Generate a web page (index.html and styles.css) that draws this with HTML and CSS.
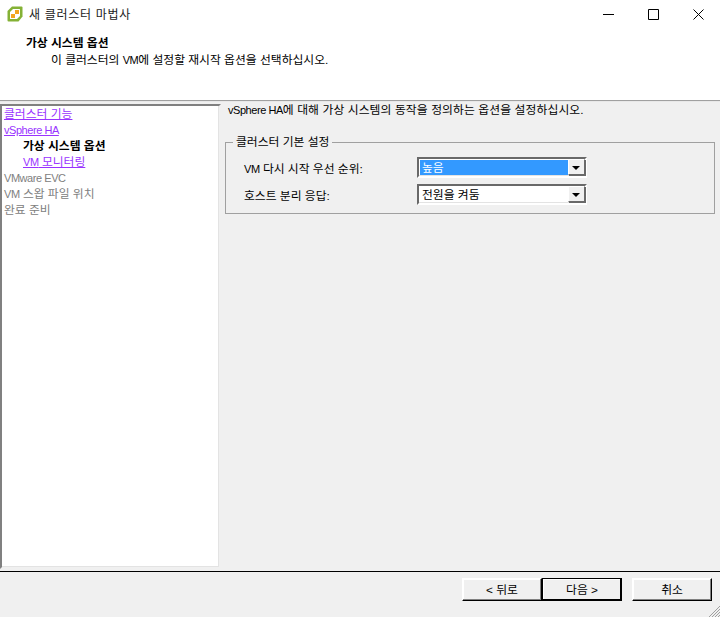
FILE: index.html
```html
<!DOCTYPE html>
<html lang="ko">
<head>
<meta charset="utf-8">
<title>새 클러스터 마법사</title>
<link rel="stylesheet" href="styles.css">
</head>
<body>
<div class="window">
  <header class="titlebar">
    <svg class="logo" width="16" height="16" viewBox="0 0 16 16">
      <path d="M5 .5h9.500a1 1 0 0 1 1 1v9l-4 5H1.500a1 1 0 0 1-1-1V5z" fill="#84b135"/>
      <path d="M6 3h6.500a.5.500 0 0 1 .5.500V10l-3 3H3.500a.5.500 0 0 1-.5-.5V6z" fill="#fff"/>
      <path d="M8 4h4v4H8.500V8H8zM4 8h4v4H4z" fill="#f2a51f"/>
    </svg>
    <span class="title">새 클러스터 마법사</span>
    <div class="controls">
      <svg width="11" height="11" viewBox="0 0 11 11"><path d="M0 5.500h11" stroke="#000" fill="none"/></svg>
      <svg width="11" height="11" viewBox="0 0 11 11"><path d="M.5.500h10v10H.500z" stroke="#000" fill="none"/></svg>
      <svg width="11" height="11" viewBox="0 0 11 11"><path d="M.5.500l10 10M10.500.500l-10 10" stroke="#000" fill="none"/></svg>
    </div>
  </header>
  <section class="heading">
    <div class="heading-title">가상 시스템 옵션</div>
    <div class="heading-sub">이 클러스터의 <span class="lat">VM</span>에 설정할 재시작 옵션을 선택하십시오.</div>
  </section>
  <main class="body">
    <nav class="steps">
      <a class="step link">클러스터 기능</a>
      <a class="step link"><span class="lat">vSphere HA</span></a>
      <span class="step sub current">가상 시스템 옵션</span>
      <a class="step sub link"><span class="lat">VM</span> 모니터링</a>
      <span class="step off"><span class="lat">VMware EVC</span></span>
      <span class="step off"><span class="lat">VM</span> 스왑 파일 위치</span>
      <span class="step off">완료 준비</span>
    </nav>
    <div class="content">
      <p class="intro"><span class="lat">vSphere HA</span>에 대해 가상 시스템의 동작을 정의하는 옵션을 설정하십시오.</p>
      <fieldset class="group">
        <legend>클러스터 기본 설정</legend>
        <div class="row">
          <label><span class="lat">VM</span> 다시 시작 우선 순위:</label>
          <div class="combo"><span class="value selected">높음</span><span class="arrow"></span></div>
        </div>
        <div class="row">
          <label>호스트 분리 응답:</label>
          <div class="combo"><span class="value">전원을 켜둠</span><span class="arrow"></span></div>
        </div>
      </fieldset>
    </div>
  </main>
  <footer class="footer">
    <div class="buttons">
      <div class="pair">
        <button class="btn">&lt; 뒤로</button>
        <button class="btn primary">다음 &gt;</button>
      </div>
      <button class="btn">취소</button>
    </div>
    <svg class="grip" width="12" height="12" viewBox="0 0 12 12"><path d="M12 1L1 12M12 4L4 12M12 7L7 12M12 10L10 12" stroke="#a0a0a0" fill="none"/></svg>
  </footer>
</div>
</body>
</html>
```

FILE: styles.css
```css
* { box-sizing: border-box; }
html, body { margin: 0; padding: 0; }
body {
  width: 720px;
  height: 617px;
  overflow: hidden;
  font-family: "Liberation Sans", "Noto Sans CJK KR", sans-serif;
  font-size: 11.8px;
  color: #000;
  background: #f0f0f0;
}
.lat { font-size: 11px; letter-spacing: -0.45px; }
.window { display: flex; flex-direction: column; height: 617px; position: relative; }
.titlebar { height: 30px; background: #fff; display: flex; align-items: center; padding: 0 0 2px 7px; }
.logo { margin-right: 6px; }
.title { font-size: 12px; color: #222; flex: 1; letter-spacing: 0.7px; padding-bottom: 2px; }
.controls { display: flex; gap: 34px; padding-right: 16px; }
.heading { height: 71px; background: #fff; border-bottom: 1px solid #a0a0a0; padding: 6px 0 0 26px; }
.heading-title { font-weight: 700; height: 15px; line-height: 15px; }
.heading-sub { padding-left: 25px; line-height: 15px; margin-top: 2px; }
.body { flex: 1; display: flex; padding-top: 2px; border-top: 1px solid #e8e8e8; }
.steps {
  width: 221px;
  height: 465px;
  background: #fff;
  border: 2px solid;
  border-color: #808080 #f0f0f0 #f0f0f0 #808080;
  box-shadow: inset -1px -1px 0 #e3e3e3;
  padding: 1px 2px 0;
  display: flex;
  flex-direction: column;
}
.step { height: 16px; line-height: 15px; white-space: nowrap; }
.link { color: #9933ff; text-decoration: underline; }
.sub { padding-left: 19px; }
.current { font-weight: 700; }
.off { color: #808080; }
.content { flex: 1; padding: 0 5px 0 4px; }
.intro { margin: 0 0 0 3px; height: 15px; line-height: 13px; white-space: nowrap; letter-spacing: 0.1px; }
.group {
  margin: 17px 0 0;
  height: 78px;
  border: 1px solid #a0a0a0;
  padding: 6px 0 0 18px;
}
.group legend { padding: 0 3px; margin-left: -11px; line-height: 12px; }
.row { display: flex; align-items: center; height: 27px; }
.row label { width: 173px; }
.combo {
  width: 170px;
  height: 21px;
  display: flex;
  background: #fff;
  border: 2px solid;
  border-color: #696969 #fff #fff #696969;
  box-shadow: inset -1px -1px 0 #e3e3e3;
  padding: 1px 0 1px 1px;
}
.value { flex: 1; line-height: 17px; padding-left: 2px; }
.selected { background: #3399ff; color: #fff; }
.arrow {
  width: 17px;
  margin: -1px 0 0;
  background: #f0f0f0;
  border: 1px solid;
  border-color: #fff #696969 #696969 #fff;
  box-shadow: 1px 1px 0 #696969;
  position: relative;
}
.arrow::after {
  content: "";
  position: absolute;
  left: 3px;
  top: 6px;
  border: 4px solid transparent;
  border-top-color: #000;
  border-bottom: 0;
}
.footer { height: 46px; border-top: 1px solid #000; position: relative; }
.buttons { display: flex; justify-content: flex-end; gap: 10px; padding: 6px 8px 0 0; }
.pair { display: flex; }
.btn {
  width: 80px;
  height: 23px;
  padding: 0 0 2px;
  font: inherit;
  background: #f0f0f0;
  border: 1px solid;
  border-color: #fff #000 #000 #fff;
  box-shadow: inset -1px -1px 0 #808080, inset 1px 1px 0 #fff;
}
.primary {
  border: 1px solid #000;
  box-shadow: inset -1px -1px 0 #000, inset 1px 1px 0 #fff;
}
.grip { position: absolute; right: 0; bottom: 0; }
```
